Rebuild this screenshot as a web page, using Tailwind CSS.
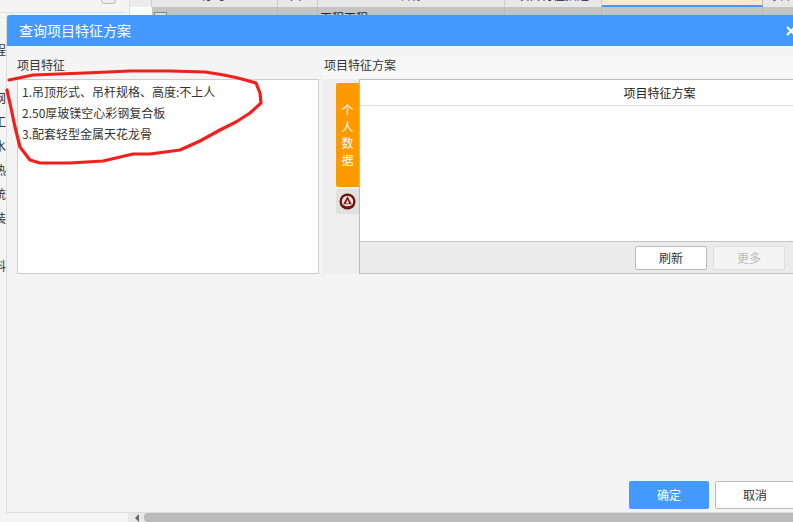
<!DOCTYPE html>
<html lang="zh-CN">
<head>
  <meta charset="UTF-8" />
  <title>查询项目特征方案</title>
  <script src="https://cdn.jsdelivr.net/npm/@tailwindcss/browser@4"></script>
</head>
<body class="relative w-[793px] h-[522px] overflow-hidden bg-[#f4f4f4] text-[12px] text-[#333] font-['Noto_Sans_CJK_SC','Noto_Sans',sans-serif]">

  <!-- page behind the dialog -->
  <div class="flex h-[15px] w-full">
    <div class="w-[130px] shrink-0 border-r border-[#ddd] relative">
      <div class="absolute left-[101px] top-0 w-[15px] h-[4px] border border-t-0 border-[#bbb] bg-[#eee] rounded-b-sm"></div>
      <div class="absolute left-0 top-[12px] w-[126px] h-px bg-[#e0e0e0]"></div>
    </div>
    <div class="flex-1 flex flex-col text-[#222]">
      <div class="flex h-[7px] bg-[#e8e8e8] overflow-hidden">
        <div class="w-[22px] bg-[#ececec] border-r border-[#ccc]"></div>
        <div class="w-[126px] border-r border-[#ccc] overflow-hidden"><div class="h-[12px] -mt-[11px] leading-[12px] text-center">序号</div></div>
        <div class="w-[40px] border-r border-[#ccc] overflow-hidden"><div class="h-[12px] -mt-[11px] leading-[12px] text-center">单位</div></div>
        <div class="w-[187px] border-r border-[#ccc] overflow-hidden"><div class="h-[12px] -mt-[11px] leading-[12px] text-center">名称</div></div>
        <div class="w-[97px] border-r border-[#ccc] overflow-hidden"><div class="h-[12px] -mt-[11px] leading-[12px] text-center whitespace-nowrap">项目特征描述</div></div>
        <div class="w-[161px] bg-[#ffe8cc] border-r border-[#bbb] border-b-2 border-b-[#4499ff]"></div>
        <div class="flex-1 overflow-hidden pl-[4px]"><div class="h-[12px] -mt-[11px] leading-[12px]">综合</div></div>
      </div>
      <div class="flex h-[8px] bg-[#c4c4c4] overflow-hidden">
        <div class="w-[22px] bg-white"></div>
        <div class="w-[126px] border-r border-[#bbb] pl-[2px] pt-[5px]"><div class="w-[13px] h-[13px] border border-[#888] bg-[#ddd]"></div></div>
        <div class="w-[40px] border-r border-[#bbb]"></div>
        <div class="w-[187px] border-r border-[#bbb] pl-[2px] pt-[5px] leading-[12px] whitespace-nowrap">工程工程</div>
        <div class="w-[97px] border-r border-[#bbb]"></div>
        <div class="w-[161px] border-r border-[#bbb]"></div>
      </div>
    </div>
  </div>

  <!-- edge of the sidebar showing left of the dialog -->
  <div class="flex flex-col gap-[12px] pt-[29px] w-[7px] overflow-hidden text-[#333] leading-[12px]">
    <span class="-ml-[6px]">程</span>
    <span class="-ml-[6px] mt-[24px]">网</span>
    <span class="-ml-[6px]">工</span>
    <span class="-ml-[6px]">水</span>
    <span class="-ml-[6px]">热</span>
    <span class="-ml-[6px]">统</span>
    <span class="-ml-[6px]">装</span>
    <span class="-ml-[6px] mt-[24px]">料</span>
  </div>

  <!-- bottom scrollbar -->
  <div class="absolute left-[128px] right-0 bottom-0 h-[9px] bg-[#e8e8e8] flex items-center">
    <div class="ml-[7px] w-0 h-0 border-y-[4px] border-y-transparent border-r-[4px] border-r-[#666]"></div>
    <div class="ml-[5px] flex-1 h-[9px] rounded-l-[4px] bg-[#bbb]"></div>
  </div>

  <!-- dialog -->
  <div class="absolute left-[6px] top-[15px] w-[800px] h-[498px] bg-[#f4f4f4] border-l border-b border-[#ddd] flex flex-col">
    <div class="h-[31px] bg-[#4499ff] text-white text-[14px] flex items-center pl-[12px] rounded-tl-[3px] relative">
      查询项目特征方案
      <svg class="absolute left-[779px] top-[11px]" width="10" height="10" viewBox="0 0 10 10">
        <path d="M1 1 L9 9 M9 1 L1 9" stroke="#fff" stroke-width="2.2"/>
      </svg>
    </div>

    <div class="flex pl-[10px] pt-[10px]">
      <!-- left column -->
      <div class="w-[302px] shrink-0 flex flex-col">
        <div class="h-[23px] leading-[17px]">项目特征</div>
        <div class="h-[195px] bg-white border border-[#ccc] px-[4px] pt-[1px] leading-[21px]">
          <div>1.吊顶形式、吊杆规格、高度:不上人</div>
          <div>2.50厚玻镁空心彩钢复合板</div>
          <div>3.配套轻型金属天花龙骨</div>
        </div>
      </div>

      <!-- right column -->
      <div class="flex-1 flex flex-col ml-[4px]">
        <div class="h-[23px] leading-[17px] bg-[#f7f7f7] pl-px">项目特征方案</div>
        <div class="flex h-[195px] bg-[#eee]">
          <div class="w-[36px] shrink-0 pl-[13px] pt-[4px] flex flex-col gap-[2px]">
            <div class="h-[104px] bg-[#ff9900] rounded-l-[2px] text-white text-center pt-[19px] leading-[16.5px]">个<br>人<br>数<br>据</div>
            <div class="h-[25px] bg-[#e0e0e0] rounded-l-[2px] flex items-center justify-center">
              <svg class="w-[17px] h-[17px]" viewBox="0 0 18 18">
                <circle cx="9" cy="9" r="8.5" fill="#6e1210"/>
                <circle cx="9" cy="9" r="6" fill="#f3e6e2"/>
                <path d="M9 3.2 L13.6 12 H4.4 Z" fill="#8a1a14"/>
                <path d="M9 7.2 L10.8 11 H7.2 Z" fill="#f3e6e2"/>
                <path d="M4 12.4 Q9 15.6 14 12.4 L13 14.4 Q9 16 5 14.4 Z" fill="#6e1210"/>
              </svg>
            </div>
          </div>
          <div class="w-[600px] shrink-0 flex flex-col border-l border-t border-[#bbb]">
            <div class="h-[26px] bg-white border-b border-[#ddd] flex items-center justify-center text-[#222]">项目特征方案</div>
            <div class="flex-1 bg-white"></div>
            <div class="h-[33px] bg-[#ebebeb] border-t border-b border-[#c4c4c4] flex items-center gap-[6px] pl-[275px]">
              <div class="w-[72px] h-[24px] bg-white border border-[#bbb] rounded-[2px] flex items-center justify-center">刷新</div>
              <div class="w-[72px] h-[24px] bg-[#f4f4f4] border border-[#ddd] rounded-[2px] flex items-center justify-center text-[#bbb]">更多</div>
            </div>
          </div>
        </div>
      </div>
    </div>

    <div class="flex gap-[6px] pl-[622px] pt-[207px]">
      <div class="w-[80px] h-[28px] bg-[#4499ff] text-white rounded-[2px] flex items-center justify-center">确定</div>
      <div class="w-[80px] h-[28px] bg-white border border-[#bbb] rounded-[2px] flex items-center justify-center">取消</div>
    </div>
  </div>

  <!-- hand-drawn red circle on top of the screenshot -->
  <svg class="absolute left-0 top-0 pointer-events-none" width="793" height="522" viewBox="0 0 793 522" fill="none">
    <path d="M9 80 L33 75 L85 73 L130 71 L170 71 L205 72 L224 75 L238 78 L256 83 L260 93 L261 103 L250 113 L236 122 L220 130 L200 141 L180 150 L165 152 L150 154 L133 154 L103 161 L70 163 L40 163 L30 160 L20 147 L15 127 L11 108 L7 90" stroke="#f0201a" stroke-width="3.2" stroke-linecap="round" stroke-linejoin="round"/>
  </svg>
</body>
</html>
